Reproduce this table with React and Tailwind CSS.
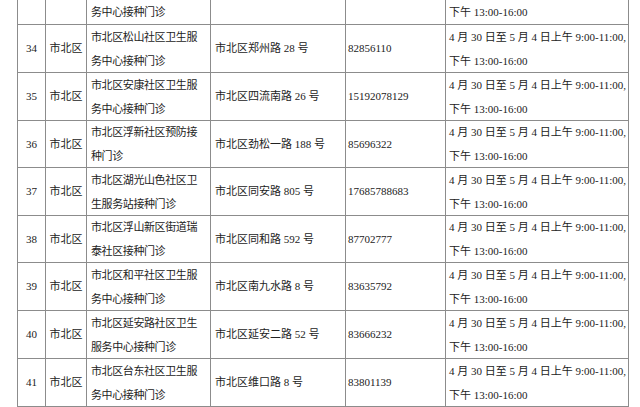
import React from "react";

const rows = [
  {
    no: "34",
    name: ["市北区松山社区卫生服", "务中心接种门诊"],
    addr: "市北区郑州路 28 号",
    tel: "82856110",
  },
  {
    no: "35",
    name: ["市北区安康社区卫生服", "务中心接种门诊"],
    addr: "市北区四流南路 26 号",
    tel: "15192078129",
  },
  {
    no: "36",
    name: ["市北区浮新社区预防接", "种门诊"],
    addr: "市北区劲松一路 188 号",
    tel: "85696322",
  },
  {
    no: "37",
    name: ["市北区湖光山色社区卫", "生服务站接种门诊"],
    addr: "市北区同安路 805 号",
    tel: "17685788683",
  },
  {
    no: "38",
    name: ["市北区浮山新区街道瑞", "泰社区接种门诊"],
    addr: "市北区同和路 592 号",
    tel: "87702777",
  },
  {
    no: "39",
    name: ["市北区和平社区卫生服", "务中心接种门诊"],
    addr: "市北区南九水路 8 号",
    tel: "83635792",
  },
  {
    no: "40",
    name: ["市北区延安路社区卫生", "服务中心接种门诊"],
    addr: "市北区延安二路 52 号",
    tel: "83666232",
  },
  {
    no: "41",
    name: ["市北区台东社区卫生服", "务中心接种门诊"],
    addr: "市北区维口路 8 号",
    tel: "83801139",
  },
];

const Cell = ({ className = "", children }) => (
  <div className={`bg-white flex items-center ${className}`}>{children}</div>
);

const App = () => {
  return (
    <div className="min-h-screen bg-white overflow-hidden font-['Liberation_Serif','Noto_Sans_CJK_SC',serif] text-[11px] text-[#222]">
      {/* the table runs on from the page above: only the tail of the previous row shows */}
      <div className="ml-[17px] w-[612px] grid grid-cols-[27px_40px_123px_134px_99px_182px] grid-rows-[24px_47px_47px_46px_47px_46px_47px_47px_47px] gap-px px-px pb-px bg-[#8c8c8c]">
        <Cell />
        <Cell />
        <Cell className="pl-[4px] leading-[24px] whitespace-nowrap tracking-[-0.4px]">
          务中心接种门诊
        </Cell>
        <Cell />
        <Cell />
        <Cell className="pl-[3px] leading-[24px] whitespace-nowrap">
          下午 13:00-16:00
        </Cell>

        {rows.map((r) => (
          <React.Fragment key={r.no}>
            <Cell className="justify-center">{r.no}</Cell>
            <Cell className="justify-center">市北区</Cell>
            <Cell className="pl-[4px]">
              <div className="leading-[24px] whitespace-nowrap tracking-[-0.4px]">
                <div>{r.name[0]}</div>
                <div>{r.name[1]}</div>
              </div>
            </Cell>
            <Cell className="pl-[4px] whitespace-nowrap">{r.addr}</Cell>
            <Cell className="pl-[2px]">{r.tel}</Cell>
            <Cell className="pl-[3px]">
              <div className="leading-[24px] whitespace-nowrap">
                <div>4 月 30 日至 5 月 4 日上午 9:00-11:00,</div>
                <div>下午 13:00-16:00</div>
              </div>
            </Cell>
          </React.Fragment>
        ))}
      </div>
    </div>
  );
};

export default App;
